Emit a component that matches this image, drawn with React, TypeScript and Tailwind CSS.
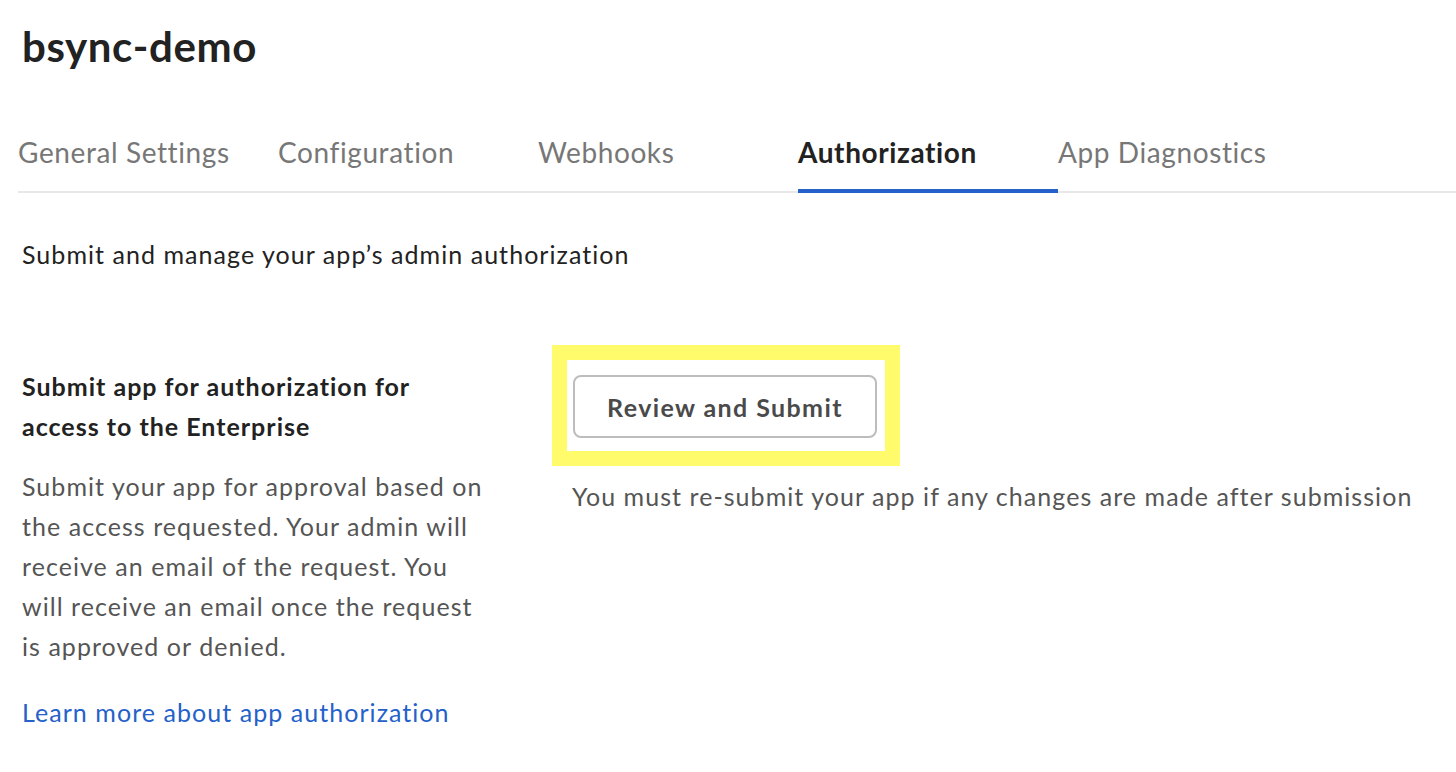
import React from 'react';

const TABS = ['General Settings', 'Configuration', 'Webhooks', 'Authorization', 'App Diagnostics'];

export default function App() {
  const active = 'Authorization';

  return (
    <div className="min-h-screen bg-white font-['Lato','Liberation_Sans',sans-serif] text-[#222]">
      {/* Header */}
      <div className="pl-[22px] pt-[20px]">
        <h1 className="text-[42px] font-bold leading-[52px] tracking-[0.6px] text-[#222]">bsync-demo</h1>
      </div>

      {/* Tabs */}
      <div className="ml-[18px] mt-[60px] flex border-b-2 border-[#e8e8e8]">
        {TABS.map((tab) => (
          <div
            key={tab}
            className={`relative w-[260px] shrink-0 pb-[19px] text-[28px] leading-[40px] tracking-[0.6px] ${
              tab === active ? 'font-bold text-[#222]' : 'text-[#777]'
            }`}
          >
            {tab}
            {tab === active && (
              <span className="absolute left-0 right-0 -bottom-[2px] h-[4px] bg-[#2461c9]" />
            )}
          </div>
        ))}
      </div>

      {/* Content */}
      <div className="pl-[22px] text-[25px] leading-[40px] tracking-[1.05px]">
        <p className="mt-[41px] text-[#222]">Submit and manage your app’s admin authorization</p>

        <div className="mt-[92px] flex">
          {/* Left column */}
          <div className="w-[470px] shrink-0">
            <h2 className="font-bold tracking-[1px] text-[#222]">
              Submit app for authorization for access to the Enterprise
            </h2>
            <p className="mt-[20px] text-[#555]">
              Submit your app for approval based on the access requested. Your admin will receive an email of the
              request. You will receive an email once the request is approved or denied.
            </p>
            <a href="#" className="mt-[26px] block text-[#2461c9]">
              Learn more about app authorization
            </a>
          </div>

          {/* Right column */}
          <div className="ml-[80px] pt-[9px]">
            <div className="relative ml-[1px] inline-block">
              <button className="relative z-10 h-[63px] w-[304px] rounded-[8px] border-2 border-[#bdbdbd] bg-white font-bold tracking-[1.4px] text-[#4a4a4a]">
                Review and Submit
              </button>
              {/* highlight annotation */}
              <span className="pointer-events-none absolute -left-[21px] -top-[30px] h-[121px] w-[348px] border-[15px] border-[#fffb6b]" />
            </div>
            <p className="mt-[38px] text-[#555]">
              You must re-submit your app if any changes are made after submission
            </p>
          </div>
        </div>
      </div>
    </div>
  );
}
